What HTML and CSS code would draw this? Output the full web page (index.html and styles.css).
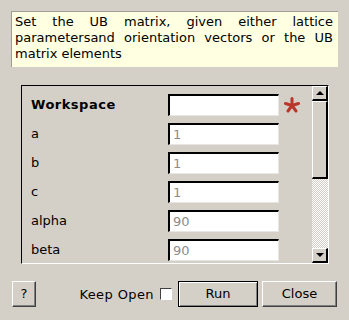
FILE: index.html
```html
<!DOCTYPE html>
<html>
<head>
<meta charset="utf-8">
<link rel="stylesheet" href="styles.css">
</head>
<body>
<div class="dialog">
  <div class="desc">
    <span class="line just">Set the UB matrix, given either lattice</span>
    <span class="line just">parametersand orientation vectors or the UB</span>
    <span class="line">matrix elements</span>
  </div>
  <div class="frame">
    <div class="rows">
      <div class="label bold">Workspace</div>
      <div class="input"></div>
      <div class="star">
        <svg width="16" height="16" viewBox="0 0 16 16">
          <g stroke="#b8372b" stroke-width="3" stroke-linecap="round">
            <line x1="8" y1="8.5" x2="8" y2="1.5"/>
            <line x1="8" y1="8.5" x2="14.5" y2="6.5"/>
            <line x1="8" y1="8.5" x2="1.5" y2="6.5"/>
            <line x1="8" y1="8.5" x2="12" y2="14"/>
            <line x1="8" y1="8.5" x2="4" y2="14"/>
          </g>
        </svg>
      </div>
      <div class="label">a</div>
      <div class="input">1</div>
      <div></div>
      <div class="label">b</div>
      <div class="input">1</div>
      <div></div>
      <div class="label">c</div>
      <div class="input">1</div>
      <div></div>
      <div class="label">alpha</div>
      <div class="input">90</div>
      <div></div>
      <div class="label">beta</div>
      <div class="input">90</div>
      <div></div>
    </div>
    <div class="scrollbar">
      <div class="sbtn"><span class="arrow up"></span></div>
      <div class="thumb"></div>
      <div class="trough"></div>
      <div class="sbtn"><span class="arrow down"></span></div>
    </div>
  </div>
  <div class="buttons">
    <div class="btn help">?</div>
    <div class="spacer"></div>
    <div class="keep">Keep Open</div>
    <div class="check"></div>
    <div class="btn run">Run</div>
    <div class="btn close">Close</div>
  </div>
</div>
</body>
</html>
```

FILE: styles.css
```css
* { box-sizing: border-box; }
html, body {
  margin: 0;
  padding: 0;
}
body {
  width: 349px;
  height: 320px;
  overflow: hidden;
  background: #d4d0c8;
  font-family: "DejaVu Sans", sans-serif;
  font-size: 13px;
  color: #000;
}
.dialog {
  display: flex;
  flex-direction: column;
  padding: 11px 11px 0 11px;
}
.desc {
  width: 327px;
  height: 56px;
  background: #ffffe1;
  border-top: 1px solid #a09d97;
  border-left: 1px solid #a09d97;
  padding: 2px 5px 0 3px;
  line-height: 16px;
}
.line {
  display: block;
  white-space: nowrap;
}
.line.just {
  text-align: justify;
  text-align-last: justify;
  white-space: normal;
}
.frame {
  margin: 18px 0 0 10px;
  width: 308px;
  height: 179px;
  border-top: 1px solid #000;
  border-left: 1px solid #000;
  border-right: 1px solid #fff;
  border-bottom: 1px solid #fff;
  display: flex;
}
.rows {
  flex: 1;
  overflow: hidden;
  padding: 8px 0 0 9px;
  display: grid;
  grid-template-columns: 137px 111px 21px;
  grid-auto-rows: 22px;
  row-gap: 7px;
  column-gap: 0;
  align-content: start;
  align-items: center;
}
.label { line-height: 22px; }
.bold { font-weight: bold; letter-spacing: 0.5px; }
.input {
  height: 22px;
  background: #fff;
  border-top: 2px solid #000;
  border-left: 2px solid #000;
  border-right: 1px solid #e8e6e2;
  border-bottom: 1px solid #e8e6e2;
  color: #8c8c8c;
  padding-left: 3px;
  line-height: 19px;
}
.star {
  display: flex;
  justify-content: flex-end;
  align-items: center;
  height: 22px;
}
.star svg { display: block; }
.scrollbar {
  width: 16px;
  display: flex;
  flex-direction: column;
}
.sbtn {
  height: 15px;
  background: #d4d0c8;
  border-top: 1px solid #fff;
  border-left: 1px solid #fff;
  border-right: 2px solid #000;
  border-bottom: 2px solid #000;
  display: flex;
  align-items: center;
  justify-content: center;
}
.arrow {
  width: 0;
  height: 0;
  border-left: 4px solid transparent;
  border-right: 4px solid transparent;
}
.arrow.up { border-bottom: 4px solid #000; }
.arrow.down { border-top: 4px solid #000; }
.thumb {
  height: 78px;
  background: #d4d0c8;
  border-top: 1px solid #fff;
  border-left: 1px solid #fff;
  border-right: 2px solid #000;
  border-bottom: 2px solid #000;
}
.trough {
  flex: 1;
  background: repeating-conic-gradient(#ffffff 0 25%, #d4d0c8 0 50%) 0 0 / 2px 2px;
}
.buttons {
  margin: 17px -11px 0 -11px;
  padding: 0 12px;
  height: 26px;
  display: flex;
  align-items: center;
}
.btn {
  height: 26px;
  display: flex;
  align-items: center;
  justify-content: center;
  line-height: 16px;
  background: #d4d0c8;
  border-top: 1px solid #fff;
  border-left: 1px solid #fff;
  border-right: 1px solid #404040;
  border-bottom: 1px solid #404040;
  box-shadow: inset -1px -1px 0 #808080;
}
.help { width: 24px; }
.spacer { flex: 1; }
.keep { white-space: nowrap; letter-spacing: 0.4px; }
.check {
  width: 12px;
  height: 12px;
  margin-left: 6px;
  background: #fff;
  border-top: 1px solid #404040;
  border-left: 1px solid #404040;
  border-right: 1px solid #fff;
  border-bottom: 1px solid #fff;
}
.run {
  width: 80px;
  margin-left: 6px;
  border: 1px solid #000;
  box-shadow: inset 1px 1px 0 #fff, inset -1px -1px 0 #808080;
}
.close {
  width: 75px;
  margin-left: 4px;
}
```
